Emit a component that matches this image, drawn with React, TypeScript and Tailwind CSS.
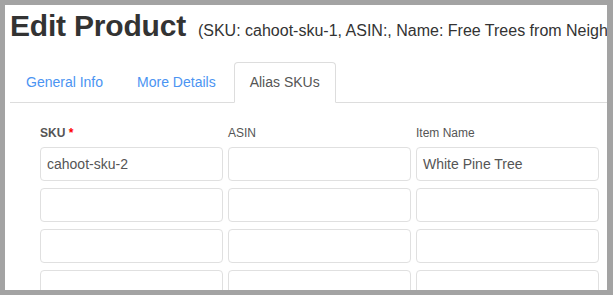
import React from 'react';

const tabs = ['General Info', 'More Details', 'Alias SKUs'];

const rows = [
  { sku: 'cahoot-sku-2', asin: '', name: 'White Pine Tree' },
  { sku: '', asin: '', name: '' },
  { sku: '', asin: '', name: '' },
  { sku: '', asin: '', name: '' },
];

const Field: React.FC<{ value: string }> = ({ value }) => (
  <div className="h-[34px] rounded-[4px] border border-[#e0e0e0] bg-white px-[6px] flex items-center text-[14px] text-[#555]">
    {value}
  </div>
);

const App: React.FC = () => {
  const active = 'Alias SKUs';

  return (
    <div className="w-[613px] h-[295px] bg-[#a3a3a3] pl-[5px] pt-[5px] pr-[6px] pb-[5px] overflow-hidden" style={{ fontFamily: '"Liberation Sans", Arial, sans-serif' }}>
      <div className="h-full bg-white pl-[5px] overflow-hidden">
        {/* Title */}
        <div className="flex items-baseline whitespace-nowrap h-[42px] pt-[1px] overflow-hidden">
          <h1 className="text-[30px] font-bold text-[#333] leading-[40px] tracking-[-0.2px]">Edit Product</h1>
          <span className="ml-[12px] text-[16px] text-[#333]">(SKU: cahoot-sku-1, ASIN:, Name: Free Trees from Neighborhood</span>
        </div>

        {/* Tabs */}
        <div className="mt-[15px] flex border-b border-[#ddd] h-[41px]">
          {tabs.map(t => (
            <div
              key={t}
              className={`mr-[2px] px-[15px] h-[41px] flex items-center text-[14px] border rounded-t-[4px] ${t === active ? 'border-[#ddd] border-b-white bg-white text-[#555]' : 'border-transparent text-[#4b94f2]'}`}
            >
              {t}
            </div>
          ))}
        </div>

        {/* Alias SKU grid */}
        <div className="pl-[30px] pt-[22px]">
          <div className="grid grid-cols-[183px_183px_183px] gap-x-[5px] text-[12px] text-[#555] mb-[5px] leading-[17px]">
            <div className="font-bold">SKU <span className="text-[#f00]">*</span></div>
            <div>ASIN</div>
            <div>Item Name</div>
          </div>
          <div className="grid grid-cols-[183px_183px_183px] gap-x-[5px] gap-y-[7px]">
            {rows.map((r, i) => (
              <React.Fragment key={i}>
                <Field value={r.sku} />
                <Field value={r.asin} />
                <Field value={r.name} />
              </React.Fragment>
            ))}
          </div>
        </div>
      </div>
    </div>
  );
};

export default App;
